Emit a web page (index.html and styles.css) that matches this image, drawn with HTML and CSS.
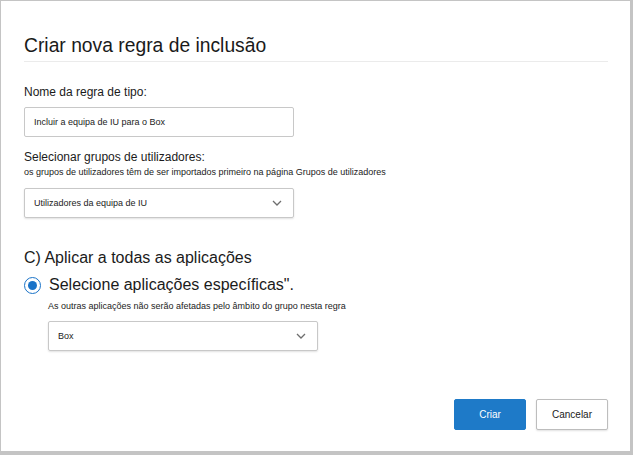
FILE: index.html
```html
<!DOCTYPE html>
<html lang="pt">
<head>
<meta charset="utf-8">
<link rel="stylesheet" href="styles.css">
</head>
<body>
<div class="dialog">
  <h1 class="title">Criar nova regra de inclusão</h1>
  <div class="divider"></div>

  <label class="label label-name">Nome da regra de tipo:</label>
  <div class="field input">Incluir a equipa de IU para o Box</div>

  <label class="label label-groups">Selecionar grupos de utilizadores:</label>
  <div class="hint hint-groups">os grupos de utilizadores têm de ser importados primeiro na página Grupos de utilizadores</div>
  <div class="field select select-groups">
    <span>Utilizadores da equipa de IU</span>
    <svg class="chev" width="10" height="6" viewBox="0 0 10 6"><path d="M1 1 L5 5 L9 1" fill="none" stroke="#6e6e6e" stroke-width="1.3"/></svg>
  </div>

  <div class="option-all">C) Aplicar a todas as aplicações</div>
  <div class="option-specific">
    <span class="radio"><span class="dot"></span></span>
    <span>Selecione aplicações específicas".</span>
  </div>
  <div class="sub">
    <div class="hint">As outras aplicações não serão afetadas pelo âmbito do grupo nesta regra</div>
    <div class="field select select-apps">
      <span>Box</span>
      <svg class="chev" width="10" height="6" viewBox="0 0 10 6"><path d="M1 1 L5 5 L9 1" fill="none" stroke="#6e6e6e" stroke-width="1.3"/></svg>
    </div>
  </div>

  <div class="actions">
    <button class="btn primary">Criar</button>
    <button class="btn secondary">Cancelar</button>
  </div>
</div>
</body>
</html>
```
FILE: styles.css
```css
html, body {
  margin: 0;
  padding: 0;
}
body {
  width: 633px;
  height: 455px;
  font-family: "Liberation Sans", Arial, sans-serif;
  color: #1b1b1b;
  background: #c4c4c4;
}
.dialog {
  box-sizing: border-box;
  width: 629px;
  height: 450px;
  margin: 1px 0 0 1px;
  background: #fff;
  padding: 0 22px 0 22px;
  display: flex;
  flex-direction: column;
  align-items: flex-start;
}
.title {
  margin: 33px 0 0 1px;
  font-weight: normal;
  font-size: 19.3px;
  line-height: 24px;
  color: #1a1a1a;
}
.divider {
  align-self: stretch;
  height: 1px;
  background: #ebebeb;
  margin-top: 3px;
  margin-left: 1px;
}
.label {
  font-size: 12px;
  line-height: 15px;
  margin-left: 1px;
}
.label-name {
  margin-top: 23px;
}
.field {
  box-sizing: border-box;
  width: 270px;
  height: 30px;
  border: 1px solid #c8c8c8;
  border-radius: 2px;
  font-size: 9px;
  display: flex;
  align-items: center;
  padding: 0 8px 0 9px;
  margin-left: 1px;
  color: #222;
}
.input {
  margin-top: 7px;
}
.select {
  justify-content: space-between;
  padding-right: 11px;
  box-shadow: 0 1px 2px rgba(0,0,0,0.12);
}
.label-groups {
  margin-top: 13px;
}
.hint {
  font-size: 9px;
  line-height: 11px;
  color: #222;
  margin-left: 1px;
}
.hint-groups {
  margin-top: 2px;
}
.select-groups {
  margin-top: 10px;
}
.option-all {
  margin-top: 30px;
  margin-left: 1px;
  font-size: 16px;
  line-height: 20px;
}
.option-specific {
  margin-top: 7px;
  margin-left: 1px;
  display: flex;
  align-items: center;
  gap: 8px;
  font-size: 16px;
  line-height: 20px;
}
.radio {
  box-sizing: border-box;
  width: 17px;
  height: 17px;
  border: 1.5px solid #1a73c8;
  border-radius: 50%;
  display: flex;
  align-items: center;
  justify-content: center;
}
.dot {
  width: 9px;
  height: 9px;
  border-radius: 50%;
  background: #1a73c8;
}
.sub {
  margin-left: 24px;
  display: flex;
  flex-direction: column;
  margin-top: 6px;
}
.select-apps {
  margin-top: 9px;
}
.actions {
  align-self: stretch;
  margin-top: auto;
  margin-bottom: 21px;
  display: flex;
  justify-content: flex-end;
  gap: 10px;
}
.btn {
  width: 72px;
  height: 31px;
  font-family: "Liberation Sans", Arial, sans-serif;
  font-size: 10px;
  border-radius: 2px;
  cursor: pointer;
}
.primary {
  background: #1e7ac8;
  color: #fff;
  border: 1px solid #1e7ac8;
}
.secondary {
  background: #fff;
  color: #222;
  border: 1px solid #bdbdbd;
  box-shadow: 0 1px 2px rgba(0,0,0,0.12);
}
```
